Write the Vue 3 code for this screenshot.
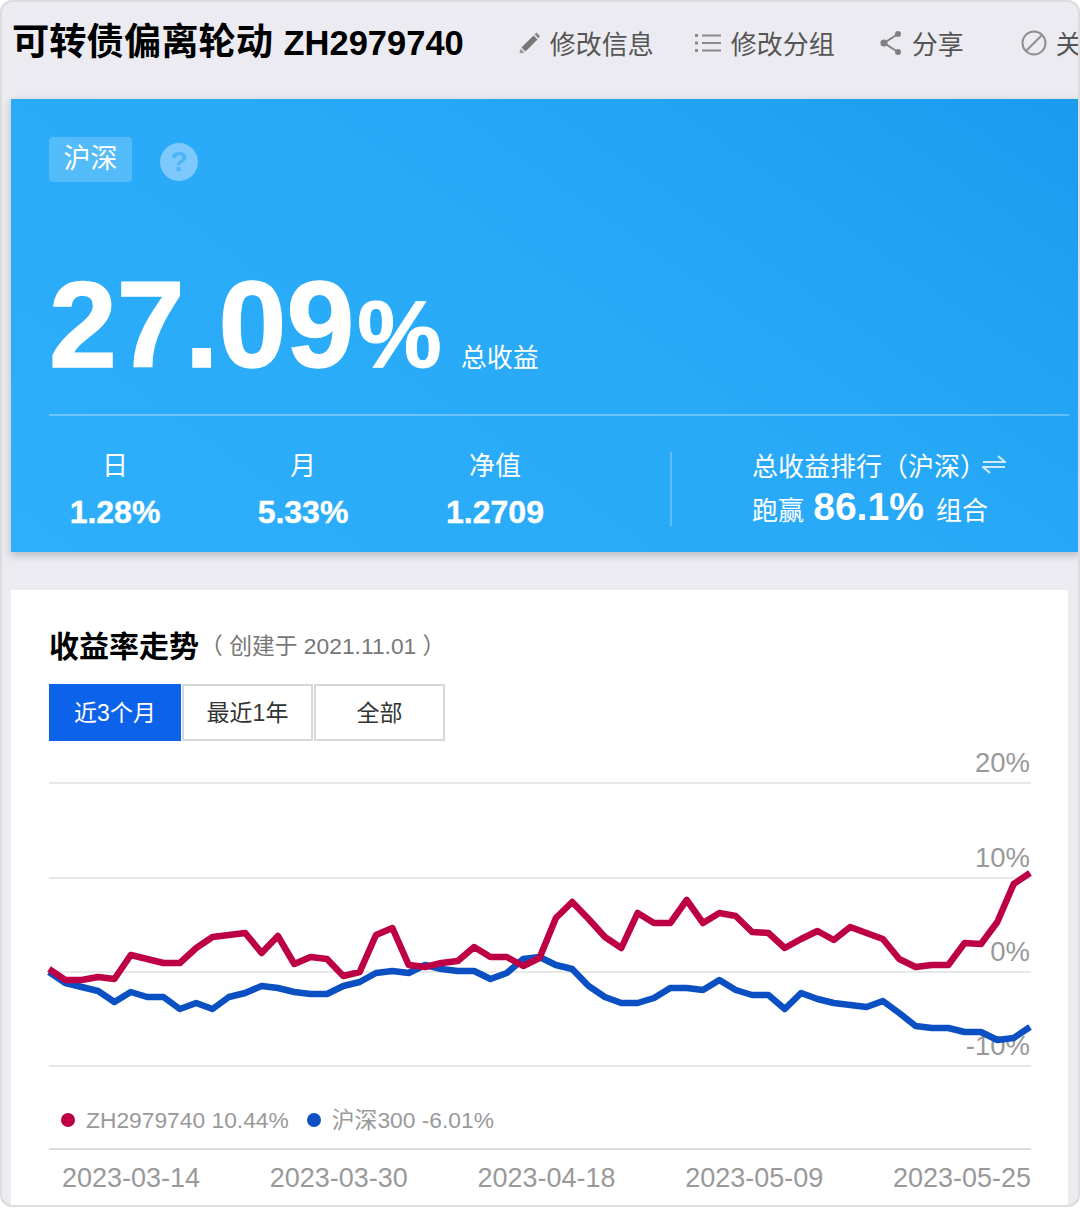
<template>
  <div class="page">
    <!-- шапка -->
    <header class="head">
      <h1 class="title">可转债偏离轮动 <span class="code">ZH2979740</span></h1>
      <div class="actions">
        <a class="act act-edit">
          <svg width="24" height="24" viewBox="0 0 24 24">
            <path d="M2.5 22.5 L3.5 17.5 L7.5 21.5 Z" fill="#999"/>
            <path d="M4.5 16.5 L16.5 4.5 L20.5 8.5 L8.5 20.5 Z" fill="#777"/>
            <path d="M17.5 3.5 L19.5 1.5 L23 5 L21.5 7.5 Z" fill="#888"/>
          </svg>
          修改信息
        </a>
        <a class="act act-group">
          <svg width="28" height="24" viewBox="0 0 28 24">
            <path d="M1 4.5h3M1 12h3M1 19.5h3" stroke="#8a8a8a" stroke-width="3" fill="none"/>
            <path d="M8 4.5h19M8 12h19M8 19.5h19" stroke="#8a8a8a" stroke-width="2" fill="none"/>
          </svg>
          修改分组
        </a>
        <a class="act act-share">
          <svg width="24" height="26" viewBox="0 0 24 26">
            <path d="M19 4 L5 13 L19 22" stroke="#808080" stroke-width="2" fill="none"/>
            <circle cx="19" cy="4" r="3" fill="#808080"/><circle cx="5" cy="13" r="3.6" fill="#808080"/><circle cx="19" cy="22" r="3" fill="#808080"/>
          </svg>
          分享
        </a>
        <a class="act act-close">
          <svg width="26" height="26" viewBox="0 0 26 26">
            <circle cx="13" cy="13" r="11.5" stroke="#8f8f8f" stroke-width="2" fill="none"/>
            <path d="M5 21 L21 5" stroke="#8f8f8f" stroke-width="2"/>
          </svg>
          关闭
        </a>
      </div>
    </header>

    <!-- синий блок с доходностью -->
    <section class="hero">
      <div class="tags">
        <span class="tag">沪深</span>
        <span class="help">?</span>
      </div>
      <div class="total">
        <span class="num">27.09</span><span class="pct">%</span>
        <span class="total-label">总收益</span>
      </div>
      <div class="stats">
        <div class="stat stat-day">
          <div class="stat-name">日</div>
          <div class="stat-val">1.28%</div>
        </div>
        <div class="stat stat-month">
          <div class="stat-name">月</div>
          <div class="stat-val">5.33%</div>
        </div>
        <div class="stat stat-net">
          <div class="stat-name">净值</div>
          <div class="stat-val">1.2709</div>
        </div>
        <div class="rank">
          <div class="rank-top">
            总收益排行（沪深）
            <svg width="24" height="20" viewBox="0 0 24 20">
              <path d="M1 8 H23 L16 2" stroke="#cfeafd" stroke-width="2" fill="none"/>
              <path d="M23 13 H1 L8 19" stroke="#cfeafd" stroke-width="2" fill="none"/>
            </svg>
          </div>
          <div class="rank-bottom">跑赢 <b>86.1%</b> 组合</div>
        </div>
      </div>
    </section>

    <!-- график -->
    <section class="card">
      <div class="card-head">
        <h2>收益率走势</h2>
        <span class="created">（ 创建于 2021.11.01 ）</span>
      </div>
      <div class="tabs">
        <button v-for="(t, i) in tabs" :key="t" class="tab" :class="{ active: i === 0 }">{{ t }}</button>
      </div>

      <svg class="chart" width="982" height="340" viewBox="49 745 982 340">
        <line v-for="y in gridLines" :key="y" x1="49" x2="1031" :y1="y" :y2="y" stroke="#e8e8e8" stroke-width="2" />
        <text v-for="l in axisLabels" :key="l.text" x="1030" :y="l.y" text-anchor="end" class="axis">{{ l.text }}</text>
        <polyline :points="bluePoints" fill="none" stroke="#0b50c3" stroke-width="6.5" stroke-linejoin="round" />
        <polyline :points="redPoints" fill="none" stroke="#bd0045" stroke-width="6.5" stroke-linejoin="round" />
      </svg>

      <div class="legend">
        <span class="leg"><i class="dot red"></i>ZH2979740 10.44%</span>
        <span class="leg"><i class="dot blue"></i>沪深300 -6.01%</span>
      </div>
      <div class="dates">
        <span v-for="d in dates" :key="d">{{ d }}</span>
      </div>
    </section>
  </div>
</template>

<script setup>
const tabs = ['近3个月', '最近1年', '全部']
const dates = ['2023-03-14', '2023-03-30', '2023-04-18', '2023-05-09', '2023-05-25']
const gridLines = [783, 878, 972, 1066]
const axisLabels = [
  { text: '20%', y: 772 },
  { text: '10%', y: 867 },
  { text: '0%', y: 961 },
  { text: '-10%', y: 1055 },
]

// значения снял с макета, шаг по x одинаковый
const red = [
  969, 980, 980, 977, 979, 955, 959, 963, 963, 948, 937, 935, 933, 953, 936, 964, 957, 959, 976, 972,
  935, 928, 965, 967, 963, 961, 947, 957, 957, 966, 958, 918, 902, 919, 937, 948, 913, 923, 923, 900,
  923, 913, 916, 932, 933, 948, 939, 931, 940, 927, 933, 939, 959, 967, 965, 965, 943, 944, 922, 884, 873,
]
const blue = [
  972, 983, 987, 991, 1002, 992, 997, 997, 1009, 1003, 1009, 997, 993, 986, 988, 992, 994, 994, 986, 982,
  973, 971, 973, 965, 969, 971, 971, 979, 973, 959, 957, 965, 969, 986, 997, 1003, 1003, 998, 988, 988,
  990, 980, 990, 995, 995, 1009, 993, 999, 1003, 1005, 1007, 1001, 1013, 1026, 1028, 1028, 1032, 1032, 1040, 1038, 1027,
]
const toPoints = (arr) => arr.map((y, i) => `${(49 + i * 16.35).toFixed(1)},${y}`).join(' ')
const redPoints = toPoints(red)
const bluePoints = toPoints(blue)
</script>

<style>
html, body { margin: 0; background: #fff; }
</style>

<style scoped>
.page {
  width: 1080px;
  height: 1207px;
  box-sizing: border-box;
  background: #ebebf1;
  border: 2px solid #dcdcdf;
  border-radius: 12px;
  overflow: hidden;
  font-family: "Liberation Sans", "Noto Sans CJK SC", sans-serif;
}

.head {
  height: 97px;
  display: flex;
  padding-left: 10px;
  padding-top: 17px;
  box-sizing: border-box;
  white-space: nowrap;
}
.title {
  margin: 0;
  font-size: 37.3px;
  line-height: 46px;
  font-weight: 700;
  color: #000;
}
.code { font-size: 34.5px; }
.actions {
  display: flex;
  margin-left: 53px;
  height: 47px;
  align-items: center;
  color: #555;
  font-size: 26px;
}
.act { display: flex; align-items: center; gap: 9px; }
.act-group { margin-left: 40px; }
.act-share { margin-left: 44px; }
.act-close { margin-left: 57px; }

.hero {
  margin-left: 9px;
  width: 1070px;
  height: 453px;
  box-sizing: border-box;
  padding: 38px 12px 0 38px;
  color: #fff;
  background: linear-gradient(215deg, #1b9bee 0%, #28a9f7 42%, #2eaffb 100%);
  box-shadow: 0 3px 8px rgba(60, 70, 90, 0.3);
}
.tags { display: flex; align-items: center; gap: 28px; height: 45px; }
.tag {
  width: 83px;
  height: 45px;
  line-height: 45px;
  text-align: center;
  font-size: 27px;
  border-radius: 4px;
  background: rgba(255, 255, 255, 0.2);
}
.help {
  width: 38px;
  height: 38px;
  border-radius: 50%;
  margin-top: 4px;
  background: #7dc9fd;
  color: #4bb4f5;
  text-align: center;
  line-height: 38px;
  font-size: 28px;
  font-weight: 700;
}
.total {
  height: 234px;
  box-sizing: border-box;
  padding-top: 82px;
  line-height: 122px;
  border-bottom: 2px solid rgba(255, 255, 255, 0.3);
  white-space: nowrap;
}
.num { font-size: 122px; font-weight: 700; -webkit-text-stroke: 1.5px #fff; }
.pct { font-size: 95px; font-weight: 700; margin-left: 3px; -webkit-text-stroke: 1px #fff; }
.total-label { font-size: 26px; margin-left: 19px; }

.stats { display: flex; position: relative; padding-top: 35px; }
.stat { text-align: center; }
.stat-day { width: 132px; }
.stat-month { width: 132px; margin-left: 56px; }
.stat-net { width: 132px; margin-left: 60px; }
.stat-name { font-size: 26px; line-height: 30px; }
.stat-val { font-size: 32px; font-weight: 700; line-height: 38px; margin-top: 12px; -webkit-text-stroke: 0.4px #fff; }
.rank {
  margin-left: 109px;
  padding-left: 80px;
  height: 74px;
  margin-top: 1px;
  border-left: 2px solid rgba(255, 255, 255, 0.25);
  font-size: 26px;
  white-space: nowrap;
}
.rank-top { display: flex; align-items: center; height: 30px; gap: 0; margin-top: -3px; }
.rank-top svg { margin-left: -4px; }
.rank-bottom { margin-top: 9px; line-height: 38px; }
.rank-bottom b { font-size: 39px; margin: 0 5px 0 2px; }

.card {
  margin: 38px 0 0 9px;
  width: 1057px;
  height: 620px;
  box-sizing: border-box;
  padding: 32px 37px 0 38px;
  background: #fff;
}
.card-head { display: flex; align-items: center; height: 44px; }
.card-head h2 { margin: 0; font-size: 30px; color: #000; font-weight: 700; }
.created { font-size: 22.8px; color: #777; margin-left: 1px; }
.tabs { display: flex; margin-top: 18px; }
.tab {
  width: 132px;
  height: 57px;
  padding: 0 0 3px;
  font: inherit;
  font-size: 23px;
  color: #333;
  background: #fff;
  border: 2px solid #d8d8d8;
}
.tab + .tab { width: 131px; margin-left: 1px; }
.tab.active { background: #0d62ea; border-color: #0d62ea; color: #fff; }

.chart { display: block; margin-top: 4px; overflow: visible; }
.axis { font-size: 27.5px; fill: #999; }

.legend {
  display: flex;
  gap: 18px;
  height: 34px;
  align-items: center;
  margin-top: 18px;
  padding-left: 12px;
  font-size: 22.8px;
  line-height: 30px;
  color: #999;
}
.leg { display: flex; align-items: center; white-space: nowrap; }
.dot { width: 14px; height: 14px; border-radius: 50%; margin-right: 11px; }
.dot.red { background: #bd0045; }
.dot.blue { background: #0c50c4; }

.dates {
  margin-top: 11px;
  border-top: 2px solid #dcdcdc;
  padding: 10px 0 0 13px;
  display: flex;
  justify-content: space-between;
  font-size: 27px;
  line-height: 36px;
  color: #999;
}
</style>
